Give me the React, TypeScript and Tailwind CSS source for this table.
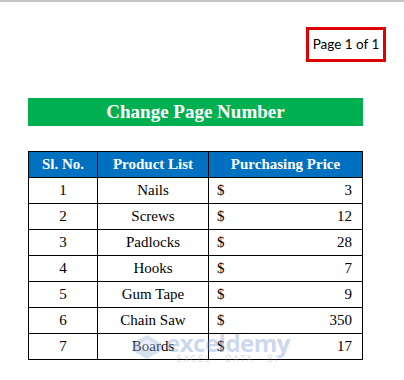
const rows = [
  { sl: 1, name: "Nails", price: 3 },
  { sl: 2, name: "Screws", price: 12 },
  { sl: 3, name: "Padlocks", price: 28 },
  { sl: 4, name: "Hooks", price: 7 },
  { sl: 5, name: "Gum Tape", price: 9 },
  { sl: 6, name: "Chain Saw", price: 350 },
  { sl: 7, name: "Boards", price: 17 },
];

function Watermark() {
  return (
    <div className="absolute left-[132px] top-[332px] flex items-start gap-1 pointer-events-none opacity-40">
      <svg width="30" height="26" viewBox="0 0 30 26">
        <path d="M15 1 L29 9 L29 17 L15 25 L1 17 L1 9 Z" fill="#9db3d9" />
        <path d="M15 5 L25 11 L15 17 L5 11 Z" fill="#c9d6ee" />
      </svg>
      <div className="flex flex-col items-center -mt-[3px]">
        <span className="text-[24px] leading-[24px] font-bold text-[#7f9fd6] font-['Open_Sans',sans-serif] tracking-[-0.5px]">
          exceldemy
        </span>
        <span className="text-[8px] leading-[10px] text-[#9aaac4] tracking-[2px] font-['DejaVu_Sans',sans-serif]">
          EXCEL · DATA · BI
        </span>
      </div>
    </div>
  );
}

export default function App() {
  return (
    <div className="relative w-[404px] h-[380px] bg-white border-t-2 border-[#c6c6c6] overflow-hidden font-['Liberation_Serif',serif]">
      <div className="flex justify-end pr-[18px] pt-[25px]">
        <div className="border-[3px] border-[#e00000] h-[35px] w-[80px] flex items-center justify-center whitespace-nowrap text-[13.5px] text-black font-['Lato',sans-serif]">
          Page 1 of 1
        </div>
      </div>

      <div className="ml-[28px] mt-[36px] w-[335px] h-[28px] bg-[#00b050] flex items-center justify-center text-white font-bold text-[19px]">
        Change Page Number
      </div>

      <table className="ml-[28px] mt-[25px] w-[335px] border-collapse text-[15px] text-black font-['Liberation_Serif',serif]">
        <thead>
          <tr className="h-[26px] bg-[#0070c0] text-white font-bold">
            <th className="w-[69px] border border-black font-bold">Sl. No.</th>
            <th className="w-[111px] border border-black font-bold">Product List</th>
            <th className="border border-black font-bold">Purchasing Price</th>
          </tr>
        </thead>
        <tbody>
          {rows.map((r) => (
            <tr key={r.sl} className="h-[26px]">
              <td className="border border-black text-center">{r.sl}</td>
              <td className="border border-black text-center">{r.name}</td>
              <td className="border border-black px-[8px]">
                <div className="flex justify-between pr-[2px]">
                  <span>$</span>
                  <span>{r.price}</span>
                </div>
              </td>
            </tr>
          ))}
        </tbody>
      </table>

      <Watermark />
    </div>
  );
}
